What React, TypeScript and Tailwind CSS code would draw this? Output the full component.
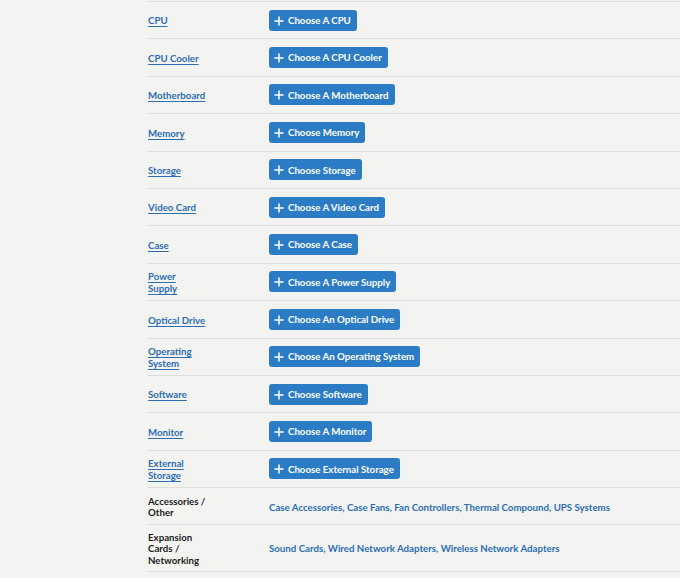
import { Plus } from 'lucide-react';

type PartRow = { label: string[]; button: string };
type ExtraRow = { label: string[]; links: string[] };

const parts: PartRow[] = [
    { label: ['CPU'], button: 'Choose A CPU' },
    { label: ['CPU Cooler'], button: 'Choose A CPU Cooler' },
    { label: ['Motherboard'], button: 'Choose A Motherboard' },
    { label: ['Memory'], button: 'Choose Memory' },
    { label: ['Storage'], button: 'Choose Storage' },
    { label: ['Video Card'], button: 'Choose A Video Card' },
    { label: ['Case'], button: 'Choose A Case' },
    { label: ['Power', 'Supply'], button: 'Choose A Power Supply' },
    { label: ['Optical Drive'], button: 'Choose An Optical Drive' },
    { label: ['Operating', 'System'], button: 'Choose An Operating System' },
    { label: ['Software'], button: 'Choose Software' },
    { label: ['Monitor'], button: 'Choose A Monitor' },
    { label: ['External', 'Storage'], button: 'Choose External Storage' },
];

const extras: ExtraRow[] = [
    { label: ['Accessories /', 'Other'], links: ['Case Accessories', 'Case Fans', 'Fan Controllers', 'Thermal Compound', 'UPS Systems'] },
    { label: ['Expansion', 'Cards /', 'Networking'], links: ['Sound Cards', 'Wired Network Adapters', 'Wireless Network Adapters'] },
];

export default function App() {
    return (
        <div className="w-[680px] h-[578px] overflow-hidden bg-[#f3f3f2] font-['Lato','Liberation_Sans',sans-serif] text-[9.7px] leading-[11.5px] font-bold">
            <div className="ml-[147px] mt-px border-t border-[#dededc]">
                {parts.map(row => (
                    <div key={row.button} className="flex items-center h-[37.4px] border-b border-[#dededc]">
                        <div className="w-[122px] pl-px pt-[2px] shrink-0">
                            <a href="#" className="text-[#2d6db2] underline underline-offset-[2px]">
                                {row.label.map((line, i) => (
                                    <span key={line} className="whitespace-nowrap">
                                        {i > 0 && <br />}
                                        {line}
                                    </span>
                                ))}
                            </a>
                        </div>
                        <button className="flex items-center h-[21px] pl-[3px] pr-[6px] pt-px rounded-[3px] bg-[#2b7cc4] text-white whitespace-nowrap">
                            <Plus size={14} strokeWidth={2.6} className="mr-[2px]" />
                            <span>{row.button}</span>
                        </button>
                    </div>
                ))}
                {extras.map((row, idx) => (
                    <div key={row.label[0]} className={`flex items-center border-b border-[#dededc] ${idx === 0 ? 'h-[37.4px]' : 'h-[46.4px]'}`}>
                        <div className="w-[122px] pl-px pt-[2px] shrink-0 text-[#1c1c1c]">
                            {row.label.map((line, i) => (
                                <span key={line} className="whitespace-nowrap">
                                    {i > 0 && <br />}
                                    {line}
                                </span>
                            ))}
                        </div>
                        <div className="pt-[2px] text-[#2d6db2] whitespace-nowrap">
                            {row.links.map((link, i) => (
                                <span key={link}>
                                    <a href="#">{link}</a>
                                    {i < row.links.length - 1 && ', '}
                                </span>
                            ))}
                        </div>
                    </div>
                ))}
            </div>
        </div>
    );
}
